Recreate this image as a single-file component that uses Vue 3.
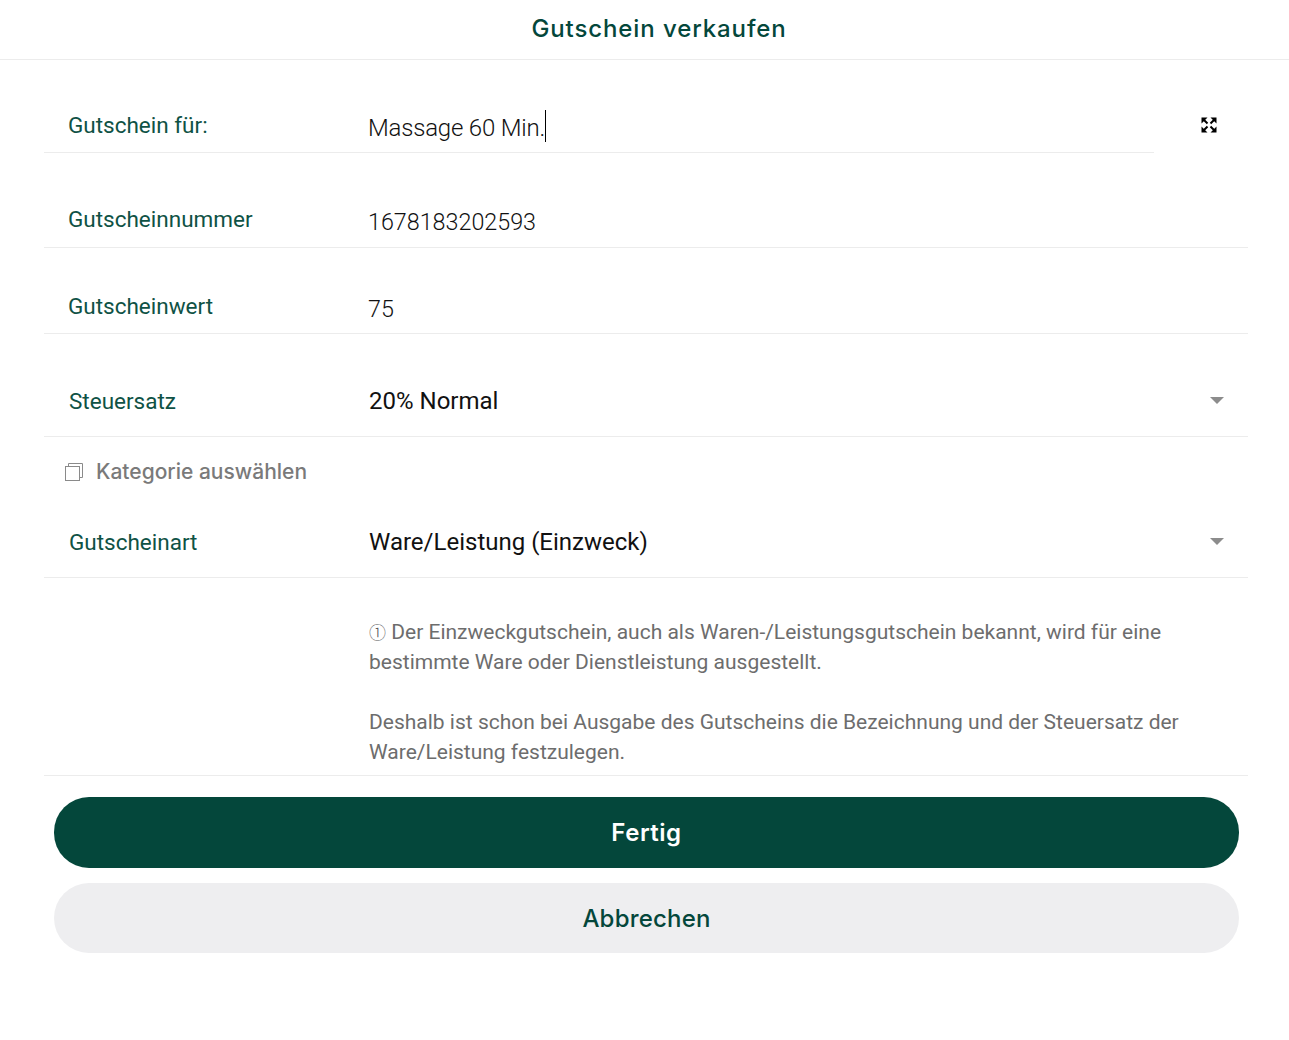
<script setup>
const inputRows = [
  { label: 'Gutscheinnummer', value: '1678183202593' },
  { label: 'Gutscheinwert', value: '75' },
]
</script>

<template>
  <div class="page">
    <header class="title-bar">
      <h1>Gutschein verkaufen</h1>
    </header>

    <main class="form">
      <div class="first-line">
        <div class="row row-first">
          <span class="label">Gutschein für:</span>
          <span class="value">Massage 60 Min.<i class="caret"></i></span>
        </div>
        <svg class="expand" width="16" height="16" viewBox="0 0 16 16" fill="#000" stroke="none">
          <path d="M0.500 0.500h6L0.500 6.500zM15.500 0.500v6L9.500 0.500zM0.500 15.500v-6L6.500 15.500zM15.500 15.500h-6L15.500 9.500z" />
          <path d="M2.500 2.500L6.500 6.500M13.500 2.500L9.500 6.500M2.500 13.500L6.500 9.500M13.500 13.500L9.500 9.500" stroke="#000" stroke-width="2" />
        </svg>
      </div>

      <div v-for="r in inputRows" :key="r.label" class="row row-input">
        <span class="label">{{ r.label }}</span>
        <span class="value">{{ r.value }}</span>
      </div>

      <div class="row row-select tax">
        <span class="label">Steuersatz</span>
        <span class="select-value">20% Normal</span>
        <i class="arrow"></i>
      </div>

      <div class="category">
        <svg width="20" height="20" viewBox="0 0 20 20" fill="none" stroke="#8a8a8a" stroke-width="1">
          <rect x="1.500" y="4.500" width="14" height="14" />
          <path d="M4.500 4.500v-3h14v14h-3" />
        </svg>
        <span>Kategorie auswählen</span>
      </div>

      <div class="row row-select kind">
        <span class="label">Gutscheinart</span>
        <span class="select-value">Ware/Leistung (Einzweck)</span>
        <i class="arrow"></i>
      </div>

      <div class="note">
        <p><span class="info">①</span> Der Einzweckgutschein, auch als Waren-/Leistungsgutschein bekannt, wird für eine<br>bestimmte Ware oder Dienstleistung ausgestellt.</p>
        <p>Deshalb ist schon bei Ausgabe des Gutscheins die Bezeichnung und der Steuersatz der<br>Ware/Leistung festzulegen.</p>
      </div>
    </main>

    <div class="actions">
      <button class="btn btn-primary">Fertig</button>
      <button class="btn btn-cancel">Abbrechen</button>
    </div>
  </div>
</template>

<style scoped>
.page {
  width: 1289px;
  height: 1040px;
  overflow: hidden;
  background: #fff;
  font-family: Roboto, "Liberation Sans", sans-serif;
}

.title-bar {
  height: 59px;
  border-bottom: 1px solid #ececec;
  display: flex;
  align-items: center;
  justify-content: center;
  padding-left: 29px;
}

.title-bar h1 {
  margin: 0 0 2px;
  font-family: Inter, sans-serif;
  font-size: 24px;
  font-weight: 500;
  letter-spacing: 0.9px;
  color: #04473b;
}

.form {
  padding: 0 41px 0 44px;
}

.first-line {
  display: flex;
  align-items: flex-start;
  padding-top: 33px;
}

.row {
  display: flex;
  align-items: center;
  border-bottom: 1px solid #ececec;
  box-sizing: border-box;
}

.row-first {
  width: 1110px;
  height: 60px;
}

.expand {
  margin: 24px 0 0 47px;
}

.row-input {
  height: 86px;
  padding-top: 26px;
}

.row-first .label {
  margin-top: 4px;
}

.row-first .value {
  margin-top: 6px;
  letter-spacing: -0.2px;
}

.row-input .label {
  margin-top: 4px;
}

.row-input .value {
  margin-top: 10px;
  font-size: 23.300px;
}

.first-line + .row-input {
  height: 95px;
  padding-top: 33px;
}

.first-line + .row-input .label {
  margin-top: 5px;
}

.label {
  width: 300px;
  margin-left: 24px;
  flex: none;
  font-size: 22.500px;
  font-weight: 400;
  color: #0f5245;
}

.value {
  font-size: 24px;
  font-weight: 300;
  color: #111;
}

.caret {
  display: inline-block;
  width: 1px;
  height: 32px;
  background: #000;
  vertical-align: -6px;
}

.row-select {
  height: 103px;
  padding-top: 34px;
  position: relative;
}

.row-select.kind {
  height: 70px;
  padding-top: 0;
  margin-top: 19px;
}

.row-select .label {
  margin-left: 25px;
  margin-top: -2px;
}

.select-value {
  margin-top: -2px;
  font-size: 24px;
  color: #111;
}

.arrow {
  position: absolute;
  right: 24px;
  bottom: 32px;
  width: 0;
  height: 0;
  border-left: 7px solid transparent;
  border-right: 7px solid transparent;
  border-top: 7px solid #8c8c8c;
}

.category {
  display: flex;
  align-items: center;
  gap: 12px;
  height: 34px;
  margin: 18px 0 0 20px;
  font-family: Inter, sans-serif;
  font-size: 21px;
  font-weight: 500;
  color: #7a7a7a;
}

.category span {
  margin-top: -2px;
}

.note {
  height: 198px;
  box-sizing: border-box;
  padding: 39px 40px 0 325px;
  border-bottom: 1px solid #ececec;
  font-size: 21px;
  line-height: 30px;
  color: #6d6d6d;
}

.note p {
  margin: 0 0 30px;
}

.note p:last-child {
  margin-bottom: 0;
}

.info {
  font-family: "Noto Sans CJK JP", sans-serif;
  font-weight: 300;
  font-size: 17px;
  color: #555;
}

.actions {
  display: flex;
  flex-direction: column;
  gap: 15px;
  padding: 21px 50px 0 54px;
}

.btn {
  border: none;
  border-radius: 35px;
  font-family: Inter, sans-serif;
  font-size: 24px;
  letter-spacing: 0.5px;
}

.btn-primary {
  height: 71px;
  background: #04473b;
  color: #fff;
  font-weight: 600;
}

.btn-cancel {
  height: 70px;
  padding-top: 2px;
  background: #eeeef0;
  color: #04473b;
  font-weight: 500;
  letter-spacing: 0.2px;
}
</style>
